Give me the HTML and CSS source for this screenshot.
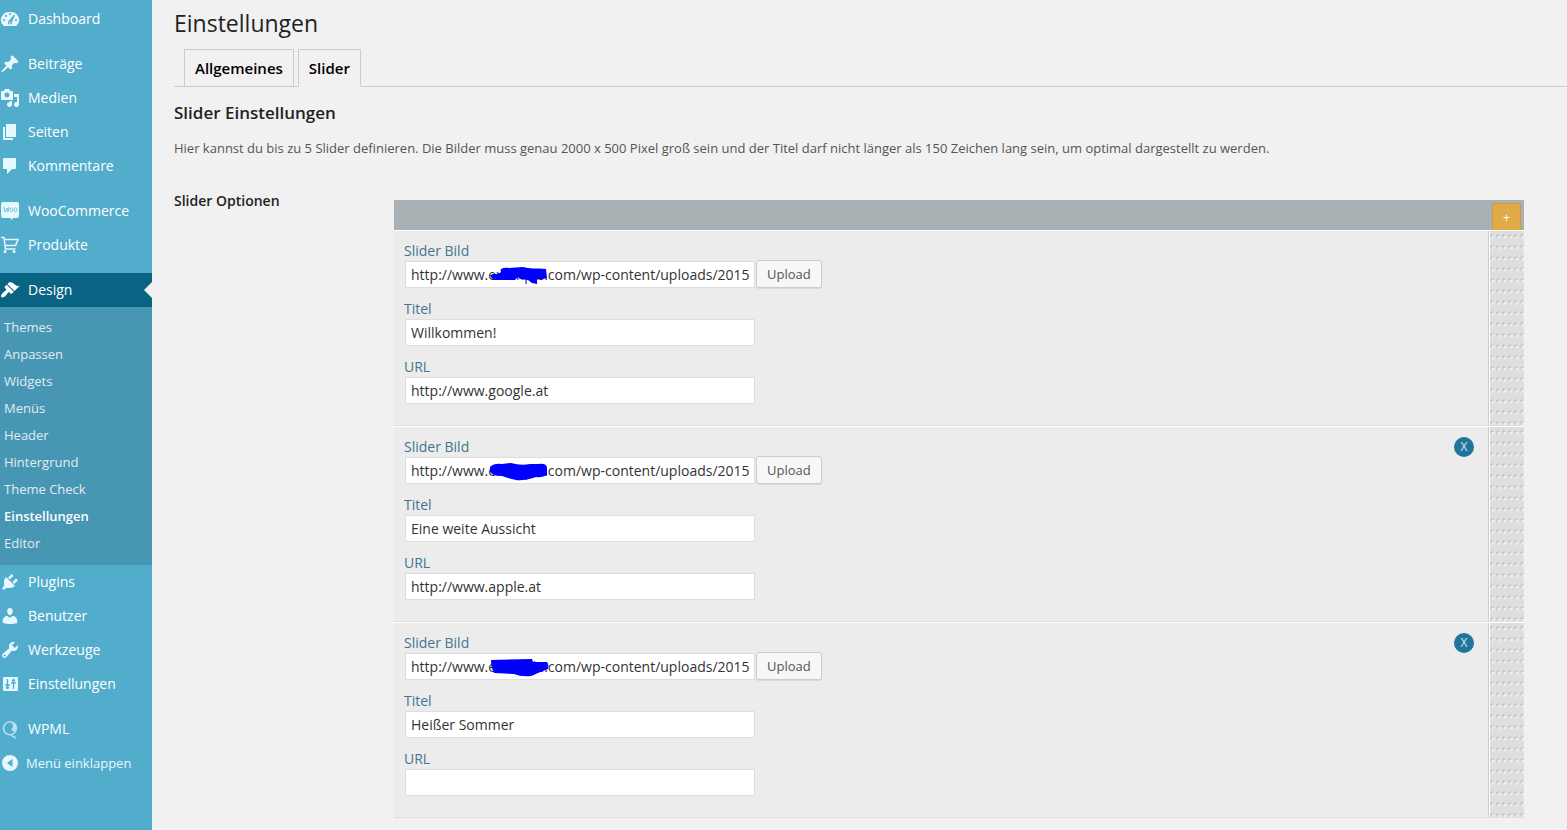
FILE: index.html
```html
<!DOCTYPE html>
<html lang="de">
<head>
    <meta charset="utf-8">
    <title>Einstellungen</title>
    <link rel="stylesheet" href="styles.css">
</head>
<body>
    <nav class="sidebar">
        <ul class="menu">
            <li><a href="#"><svg viewBox="0 0 20 20"><path fill-rule="evenodd" d="M3.76 17h12.48A7.998 7.998 0 0 0 10 3a7.998 7.998 0 0 0-6.24 14zM10 4c.55 0 1 .45 1 1s-.45 1-1 1-1-.45-1-1 .45-1 1-1zM6 6c.55 0 1 .45 1 1s-.45 1-1 1-1-.45-1-1 .45-1 1-1zM4 10c.55 0 1 .45 1 1s-.45 1-1 1-1-.45-1-1 .45-1 1-1zm12 0c.55 0 1 .45 1 1s-.45 1-1 1-1-.45-1-1 .45-1 1-1zM14 5.500l1 .7-3 6.800c.3 1.400-.7 2.500-2 2.500s-2.200-1-2-2.300c.1-.8.6-1.300 1.200-1.600zM10 12.700a.9.9 0 1 0 0 1.800.9.9 0 0 0 0-1.800z"/></svg>Dashboard</a></li>
            <li class="separator"></li>
            <li><a href="#"><svg viewBox="0 0 20 20"><path d="M10.44 3.02l1.82-1.82 6.36 6.35-1.83 1.82c-1.05-.68-2.48-.57-3.41.36l-.75.75c-.92.93-1.04 2.35-.35 3.41l-1.83 1.82-2.41-2.41-2.8 2.79c-.42.42-3.38 2.71-3.8 2.29s1.86-3.39 2.28-3.81l2.79-2.79L4.1 9.36l1.83-1.82c1.05.69 2.48.57 3.4-.36l.75-.75c.93-.92 1.05-2.35.36-3.41z"/></svg>Beiträge</a></li>
            <li><a href="#"><svg viewBox="0 0 20 20"><path fill-rule="evenodd" d="M13 11V4c0-.55-.45-1-1-1h-1.67L9 1H5L3.67 3H2c-.55 0-1 .45-1 1v7c0 .55.45 1 1 1h10c.55 0 1-.45 1-1zM7 4.5c1.38 0 2.5 1.12 2.5 2.5S8.38 9.5 7 9.5 4.5 8.38 4.5 7 5.62 4.5 7 4.5zM14 6h5v10.5c0 1.38-1.12 2.5-2.5 2.5S14 17.88 14 16.5s1.12-2.5 2.5-2.5c.17 0 .34.02.5.05V9h-3V6zm-4 8.05V13h2v3.5c0 1.38-1.12 2.5-2.5 2.5S7 17.88 7 16.5 8.12 14 9.5 14c.17 0 .34.02.5.05z"/></svg>Medien</a></li>
            <li><a href="#"><svg viewBox="0 0 20 20"><path d="M6 15V2h10v13H6zm-1 1h8v2H3V5h2v11z"/></svg>Seiten</a></li>
            <li><a href="#"><svg viewBox="0 0 20 20"><path d="M4 2h11c.6 0 1 .4 1 1v9c0 .6-.4 1-1 1h-3l-5 5v-5H4c-.6 0-1-.4-1-1V3c0-.6.4-1 1-1z"/></svg>Kommentare</a></li>
            <li class="separator"></li>
            <li><a href="#"><svg viewBox="0 0 20 20"><path d="M3 1h14q2 0 2 2v12q0 2-2 2h-4l-1 2-2-2H3q-2 0-2-2V3q0-2 2-2z"/><path class="cut thin" d="M4 6l1 5 2-4 1 4 1-5M10.5 7.5a1.2 1.6 0 1 0 2 2.5a1.2 1.6 0 1 0-2-2.5M14.5 7.5a1.2 1.6 0 1 0 2 2.5a1.2 1.6 0 1 0-2-2.5"/></svg>WooCommerce</a></li>
            <li><a href="#"><svg viewBox="0 0 20 20"><path class="line" d="M1 2.500h3l1.500 11.500h10M4.500 4.500H18l-2.500 6H5.500"/><circle cx="5" cy="16.500" r="1.500"/><circle cx="14" cy="16.500" r="1.500"/></svg>Produkte</a></li>
            <li class="separator"></li>
            <li class="current"><a href="#"><svg viewBox="0 0 20 20"><path d="M14.48 11.06L7.41 3.99l1.5-1.5c.5-.56 2.3-.47 3.51.32 1.21.8 1.43 1.28 2.91 2.1 1.18.64 2.45 1.26 4.45.85zm-.71.71L6.7 4.7 4.93 6.47c-.39.39-.39 1.02 0 1.41l1.06 1.06c.39.39.39 1.03 0 1.42-.6.6-1.43 1.11-2.21 1.69-.35.26-.7.53-1.01.84C1.43 14.23.4 16.08 1.4 17.07c.99 1 2.84-.03 4.18-1.36.31-.31.58-.66.85-1.02.57-.78 1.08-1.61 1.69-2.21.39-.39 1.02-.39 1.41 0l1.06 1.06c.39.39 1.02.39 1.41 0z"/></svg>Design</a>
                <ul class="submenu">
                    <li><a href="#">Themes</a></li>
                    <li><a href="#">Anpassen</a></li>
                    <li><a href="#">Widgets</a></li>
                    <li><a href="#">Menüs</a></li>
                    <li><a href="#">Header</a></li>
                    <li><a href="#">Hintergrund</a></li>
                    <li><a href="#">Theme Check</a></li>
                    <li><a href="#" class="active">Einstellungen</a></li>
                    <li><a href="#">Editor</a></li>
                </ul>
            </li>
            <li><a href="#"><svg viewBox="0 0 20 20"><path d="M13.11 4.36L9.87 7.6 8 5.73l3.24-3.24c.35-.34 1.05-.2 1.56.32.52.51.66 1.21.31 1.55zm-8 1.77l.91-1.12 9.01 9.01-1.19.84c-.71.71-2.63 1.16-3.82 1.16H6.14L4.9 17.26c-.59.59-1.54.59-2.12 0-.59-.58-.59-1.53 0-2.12l1.24-1.24v-3.88c0-1.13.4-3.19 1.09-3.89zm7.26 3.97l3.24-3.24c.34-.35 1.04-.21 1.55.31.52.51.66 1.21.31 1.55l-3.24 3.25z"/></svg>Plugins</a></li>
            <li><a href="#"><svg viewBox="0 0 20 20"><path d="M10 9.25c-2.27 0-2.73-3.44-2.73-3.44C7 4.02 7.82 2 9.97 2c2.16 0 2.98 2.02 2.71 3.81 0 0-.41 3.44-2.68 3.44zm0 2.57L12.72 10c2.39 0 4.52 2.33 4.52 4.53v2.49s-3.65 1.13-7.24 1.13c-3.65 0-7.24-1.13-7.24-1.13v-2.49c0-2.25 1.94-4.48 4.47-4.48z"/></svg>Benutzer</a></li>
            <li><a href="#"><svg viewBox="0 0 20 20"><path fill-rule="evenodd" d="M16.68 9.77c-1.34 1.34-3.3 1.67-4.95.99l-5.41 6.52c-.99.99-2.59.99-3.58 0s-.99-2.59 0-3.57l6.52-5.42c-.68-1.65-.35-3.61.99-4.95 1.28-1.28 3.12-1.62 4.72-1.06l-2.89 2.89 2.82 2.82 2.86-2.87c.53 1.58.18 3.39-1.08 4.65zM3.81 16.21c.4.39 1.04.39 1.43 0 .4-.4.4-1.04 0-1.43-.39-.4-1.03-.4-1.43 0-.39.39-.39 1.03 0 1.43z"/></svg>Werkzeuge</a></li>
            <li><a href="#"><svg viewBox="0 0 20 20"><path d="M4 3h13c.6 0 1 .4 1 1v12c0 .6-.4 1-1 1H4c-.6 0-1-.4-1-1V4c0-.6.4-1 1-1z"/><path class="cut" d="M7.5 5v10M5 11h5M6 13l1.500 1.500L9 13M13.500 15V5M11 9h5M12 7l1.500-1.500L15 7"/></svg>Einstellungen</a></li>
            <li class="separator"></li>
            <li><a href="#"><svg class="faded" viewBox="0 0 20 20"><path class="line" d="M12 15.500a6.500 6.500 0 1 1 4.500-6.500c0 3-1.500 4.500-3 5.500s-2 2.500-.5 3 2.500-.5 2.500 2"/><path d="M11.500 3.500c4 0 5.500 3 5 6-.5 2.500-3.500 4-4.500 2s1-2.500 1-4.500-1-2.500-1.500-3.500z"/></svg>WPML</a></li>
            <li><button type="button" class="collapse"><svg viewBox="0 0 20 20"><path fill-rule="evenodd" d="M10 2a8 8 0 1 0 0 16 8 8 0 0 0 0-16zM12.5 6v8L7 10z"/></svg>Menü einklappen</button></li>
        </ul>
    </nav>

    <main class="content">
        <h1>Einstellungen</h1>
        <div class="tabs">
            <a href="#" class="tab">Allgemeines</a>
            <a href="#" class="tab tab-active">Slider</a>
        </div>

        <h2>Slider Einstellungen</h2>
        <p class="intro">Hier kannst du bis zu 5 Slider definieren. Die Bilder muss genau 2000 x 500 Pixel groß sein und der Titel darf nicht länger als 150 Zeichen lang sein, um optimal dargestellt zu werden.</p>

        <form class="options">
            <h3>Slider Optionen</h3>
            <div class="repeater">
                <div class="repeater-head">
                    <button type="button" class="add" aria-label="Slider hinzufügen">+</button>
                </div>

                <div class="slide">
                    <div class="fields">
                        <label for="bild1">Slider Bild</label>
                        <div class="upload-row">
                            <input type="text" id="bild1" value="http://www.example.com/wp-content/uploads/2015">
                            <svg class="mark" viewBox="0 0 60 20"><path d="M2 10C4 8 9 10 12 7C10 3 15 2 20 3L34 2C40 4 48 3 57 4L58 13C52 15 49 13 48 15V19L43 18L39 15L31 14L29 12L26 15L5 15Q1 13 2 10z"/></svg>
                            <button type="button" class="upload">Upload</button>
                        </div>
                        <label for="titel1">Titel</label>
                        <input type="text" id="titel1" value="Willkommen!">
                        <label for="url1">URL</label>
                        <input type="text" id="url1" value="http://www.google.at">
                    </div>
                    <div class="handle"></div>
                </div>

                <div class="slide">
                    <div class="fields">
                        <label for="bild2">Slider Bild</label>
                        <div class="upload-row">
                            <input type="text" id="bild2" value="http://www.example.com/wp-content/uploads/2015">
                            <svg class="mark" viewBox="0 0 60 20"><path d="M1 6Q5 2 13 3L22 2Q32 5 41 3L49 3Q58 2 58 7V14Q52 17 47 16Q35 20 27 19Q18 17 13 15Q2 15 1 10z"/></svg>
                            <button type="button" class="upload">Upload</button>
                        </div>
                        <label for="titel2">Titel</label>
                        <input type="text" id="titel2" value="Eine weite Aussicht">
                        <label for="url2">URL</label>
                        <input type="text" id="url2" value="http://www.apple.at">
                    </div>
                    <button type="button" class="remove" aria-label="Slider entfernen">X</button>
                    <div class="handle"></div>
                </div>

                <div class="slide">
                    <div class="fields">
                        <label for="bild3">Slider Bild</label>
                        <div class="upload-row">
                            <input type="text" id="bild3" value="http://www.example.com/wp-content/uploads/2015">
                            <svg class="mark" viewBox="0 0 60 20"><path d="M2 3L43 2L44 5H58Q60 7 59 12L49 16Q45 18 42 19Q32 20 25 17L5 16Q2 11 2 3z"/></svg>
                            <button type="button" class="upload">Upload</button>
                        </div>
                        <label for="titel3">Titel</label>
                        <input type="text" id="titel3" value="Heißer Sommer">
                        <label for="url3">URL</label>
                        <input type="text" id="url3" value="">
                    </div>
                    <button type="button" class="remove" aria-label="Slider entfernen">X</button>
                    <div class="handle"></div>
                </div>
            </div>
        </form>
    </main>
</body>
</html>
```
FILE: styles.css
```css
* {
    box-sizing: border-box;
}

body {
    display: flex;
    min-height: 100vh;
    margin: 0;
    background: #f1f1f1;
    color: #444;
    font-family: "Open Sans", sans-serif;
    font-size: 13px;
}

ul {
    list-style: none;
    margin: 0;
    padding: 0;
}

a {
    text-decoration: none;
}

input,
button {
    font-family: inherit;
}

/* Sidebar */
.sidebar {
    flex: 0 0 152px;
    padding-top: 2px;
    background: #52accc;
}

.menu > li > a,
.collapse {
    display: flex;
    align-items: center;
    gap: 8px;
    height: 34px;
    color: #fff;
    font-size: 14px;
}

.menu > li > a {
    padding-bottom: 2px;
}

.menu > li > a svg {
    margin-top: 2px;
}

.separator {
    height: 11px;
}

.menu svg {
    width: 20px;
    height: 20px;
    fill: #e5f8ff;
}

.menu .line {
    fill: none;
    stroke: #e5f8ff;
    stroke-width: 1.5;
}

.menu .cut {
    fill: none;
    stroke: #52accc;
    stroke-width: 1.3;
}

.menu .thin {
    stroke-width: 0.7;
}

.menu .faded {
    opacity: 0.7;
}

.menu .current > a {
    position: relative;
    background: #096484;
}

.menu .current > a::after {
    content: "";
    position: absolute;
    top: 9px;
    right: 0;
    border: 8px solid transparent;
    border-left-width: 0;
    border-right-color: #f1f1f1;
}

.menu .current svg {
    fill: #fff;
}

.submenu {
    padding: 7px 0 8px;
    background: #4796b3;
}

.submenu a {
    display: block;
    padding-left: 4px;
    color: #e2ecf1;
    line-height: 27px;
}

.submenu .active {
    color: #fff;
    font-weight: 600;
}

.collapse {
    gap: 6px;
    padding: 0;
    border: 0;
    background: none;
    color: #e5f8ff;
    font-size: 13px;
    cursor: pointer;
}

/* Content */
.content {
    flex: 1;
    min-width: 0;
    padding: 9px 0 12px 22px;
}

h1 {
    margin: 0 0 11px;
    color: #222;
    font-size: 23px;
    font-weight: 400;
    line-height: 29px;
}

.tabs {
    display: flex;
    gap: 4px;
    padding-left: 10px;
    border-bottom: 1px solid #ccc;
}

.tab {
    margin-bottom: -1px;
    padding: 6px 10px;
    border: 1px solid #ccc;
    color: #000;
    font-size: 15px;
    font-weight: 600;
    line-height: 24px;
}

.tab-active {
    border-bottom-color: #f1f1f1;
}

h2 {
    margin: 14px 0 13px;
    color: #222;
    font-size: 17px;
    font-weight: 600;
    line-height: 24px;
}

.intro {
    margin: 0;
    color: #555;
    line-height: 20px;
}

.options {
    display: grid;
    grid-template-columns: 220px 1fr;
    margin: 42px 43px 0 0;
}

h3 {
    margin: -9px 0 0;
    color: #222;
    font-size: 14px;
    font-weight: 600;
    line-height: 20px;
}

/* Slider rows */
.repeater-head {
    display: flex;
    justify-content: flex-end;
    align-items: flex-end;
    height: 30px;
    padding-right: 3px;
    background: #a8b1b3;
}

.add {
    width: 29px;
    height: 27px;
    padding: 0;
    border: 1px solid #d19a3c;
    border-bottom: 0;
    border-radius: 2px 2px 0 0;
    background: #e1a948;
    color: #fff;
    font-size: 13px;
    cursor: pointer;
}

.slide {
    display: flex;
    border-top: 1px solid #fff;
    border-bottom: 1px solid #dfdfdf;
    background: #ececec;
}

.fields {
    flex: 1;
    padding: 10px;
}

.fields label {
    display: block;
    color: #447491;
    font-size: 14px;
    line-height: 20px;
}

.fields input {
    display: block;
    width: 350px;
    height: 27px;
    margin: 0 0 11px 1px;
    padding: 0 5px;
    border: 1px solid #ddd;
    background: #fff;
    color: #333;
    font-size: 14px;
}

.upload-row {
    position: relative;
    display: flex;
    gap: 1px;
}

/* Marker stroke over the domain name */
.mark {
    position: absolute;
    top: 4px;
    left: 85px;
    width: 60px;
    height: 20px;
    fill: #00f;
}

.upload {
    height: 28px;
    margin-top: -1px;
    padding: 0 10px;
    border: 1px solid #ccc;
    border-radius: 3px;
    background: #f7f7f7;
    box-shadow: 0 1px 0 rgba(0, 0, 0, 0.08);
    color: #555;
    font-size: 13px;
    cursor: pointer;
}

.remove {
    width: 20px;
    height: 20px;
    margin: 10px 14px 0 0;
    padding: 0;
    border: 0;
    border-radius: 50%;
    background: #21759b;
    color: #d5e8f0;
    font-size: 12px;
    line-height: 20px;
    cursor: pointer;
}

.handle {
    flex: 0 0 36px;
    border-left: 1px solid #ccc;
    box-shadow: inset 1px 0 #fff;
    background-color: #dedede;
    background-image:
        radial-gradient(circle at 4px 6px, #eee 1px, transparent 2px),
        radial-gradient(circle at 3px 5px, #bbb 1px, transparent 2px);
    background-size: 6px 11px;
    cursor: move;
}
```
